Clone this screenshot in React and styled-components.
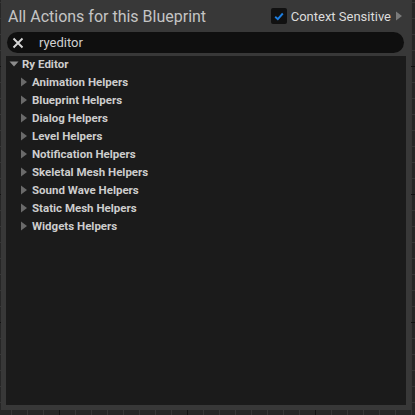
import React from "react";
import styled, { createGlobalStyle } from "styled-components";

const Global = createGlobalStyle`
  html, body {
    margin: 0;
    padding: 0;
    width: 415px;
    height: 415px;
    overflow: hidden;
    background-color: #262626;
    background-image:
      linear-gradient(to right, #111 1px, transparent 1px),
      linear-gradient(to bottom, #111 1px, transparent 1px),
      linear-gradient(to right, #363636 1px, transparent 1px),
      linear-gradient(to bottom, #363636 1px, transparent 1px);
    background-size: 128px 128px, 128px 128px, 16px 16px, 16px 16px;
    background-position: 59px 66px, 59px 66px, 11px 2px, 11px 2px;
    font-family: Roboto, "Liberation Sans", sans-serif;
  }
`;

const items = [
  "Animation Helpers",
  "Blueprint Helpers",
  "Dialog Helpers",
  "Level Helpers",
  "Notification Helpers",
  "Skeletal Mesh Helpers",
  "Sound Wave Helpers",
  "Static Mesh Helpers",
  "Widgets Helpers",
];

export default function App() {
  return (
    <>
      <Global />
      <Panel>
        <Header>
          <Title>All Actions for this Blueprint</Title>
          <Context>
            <CheckBox>
              <svg width="10" height="9" viewBox="0 0 10 9">
                <path d="M1.2 4.8 L3.8 7.2 L8.8 1.5" fill="none" stroke="#1d7ee0" strokeWidth="1.9" />
              </svg>
            </CheckBox>
            <ContextLabel>Context Sensitive</ContextLabel>
            <Caret dir="right" color="#7a7a7a" />
          </Context>
        </Header>
        <Search>
          <ClearIcon viewBox="0 0 12 12">
            <path d="M1.5 1.5 L10.5 10.5 M10.5 1.5 L1.5 10.5" stroke="#d6d6d6" strokeWidth="1.9" />
          </ClearIcon>
          <SearchText>ryeditor</SearchText>
        </Search>
        <List>
          <Row depth={0}>
            <Caret dir="down" color="#8c8c8c" />
            <Label>Ry Editor</Label>
          </Row>
          {items.map((name) => (
            <Row depth={1} key={name}>
              <Caret dir="right" color="#6a6a6a" />
              <Label>{name}</Label>
            </Row>
          ))}
        </List>
      </Panel>
    </>
  );
}

const Caret = ({ dir, color }) => (
  <CaretSvg viewBox="0 0 10 10">
    {dir === "down" ? (
      <path d="M0.5 2.5 L9.5 2.5 L5 7.5 Z" fill={color} />
    ) : (
      <path d="M2 0.5 L8 5 L2 9.5 Z" fill={color} />
    )}
  </CaretSvg>
);

const Panel = styled.div`
  box-sizing: border-box;
  margin-left: 1px;
  width: 410px;
  height: 410px;
  background: #383838;
  padding: 0 5px 5px 5px;
  display: flex;
  flex-direction: column;
`;

const Header = styled.div`
  height: 32px;
  display: flex;
  align-items: center;
  justify-content: space-between;
  padding: 0 0 0 2px;
`;

const Title = styled.div`
  color: #c4c4c4;
  font-size: 16px;
  margin-top: 1px;
`;

const Context = styled.div`
  display: flex;
  align-items: center;
  margin-right: 2px;
`;

const CheckBox = styled.div`
  width: 16px;
  height: 16px;
  background: #111111;
  border-radius: 2px;
  display: flex;
  align-items: center;
  justify-content: center;
  margin-right: 4px;
`;

const ContextLabel = styled.span`
  color: #dcdcdc;
  font-size: 13px;
  margin-right: 3px;
`;

const CaretSvg = styled.svg`
  width: 10px;
  height: 10px;
  flex: none;
`;

const Search = styled.div`
  height: 21px;
  margin: 0 2px 0 1px;
  background: #0f0f0f;
  border-radius: 11px;
  display: flex;
  align-items: center;
  padding-left: 5px;
`;

const ClearIcon = styled.svg`
  width: 12px;
  height: 12px;
  margin-right: 15px;
`;

const SearchText = styled.span`
  color: #cfcfcf;
  font-size: 13px;
`;

const List = styled.div`
  flex: 1;
  margin-top: 3px;
  background: #1b1b1b;
`;

const Row = styled.div`
  height: 18px;
  display: flex;
  align-items: center;
  padding-left: ${(p) => (p.depth === 0 ? 3 : 13)}px;
  gap: 3px;
  &:first-child {
    margin-top: -1px;
  }
`;

const Label = styled.span`
  color: #cdcdcd;
  font-size: 11.5px;
  font-weight: 700;
`;
